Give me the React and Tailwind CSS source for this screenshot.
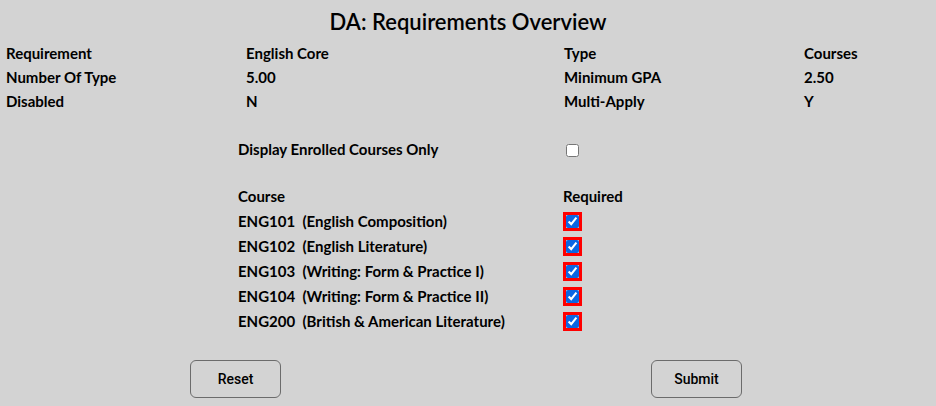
import React from "react";

const courses = [
  ["ENG101", "English Composition"],
  ["ENG102", "English Literature"],
  ["ENG103", "Writing: Form & Practice I"],
  ["ENG104", "Writing: Form & Practice II"],
  ["ENG200", "British & American Literature"],
];

export default function App() {
  return (
    <div className="w-[936px] h-[406px] bg-[#d3d3d3] text-black overflow-hidden" style={{ fontFamily: "Lato, 'Open Sans', sans-serif" }}>
      <div className="h-[41px] flex items-center justify-center pt-[1px]">
        <h1 className="text-[22px] font-semibold">DA: Requirements Overview</h1>
      </div>
      <div className="grid grid-cols-[240px_318px_240px_1fr] pl-[6px] text-[15px] font-bold leading-[24px]">
        <div>Requirement</div>
        <div>English Core</div>
        <div>Type</div>
        <div>Courses</div>
        <div>Number Of Type</div>
        <div>5.00</div>
        <div>Minimum GPA</div>
        <div>2.50</div>
        <div>Disabled</div>
        <div>N</div>
        <div>Multi-Apply</div>
        <div>Y</div>
      </div>
      <div className="mt-[24px] pl-[238px] text-[15px] font-bold">
        <div className="grid grid-cols-[325px_1fr] h-[24px] items-center">
          <div>Display Enrolled Courses Only</div>
          <div className="flex items-center">
            <input type="checkbox" className="w-[13px] h-[13px] ml-[3px] mt-[2px]" />
          </div>
        </div>
        <div className="mt-[23px] grid grid-cols-[325px_1fr] h-[25px] items-center">
          <div>Course</div>
          <div>Required</div>
        </div>
        {courses.map(([code, name]) => (
          <div key={code} className="grid grid-cols-[325px_1fr] h-[25px] items-center">
            <div className="whitespace-pre">{code}  ({name})</div>
            <div className="flex items-center">
              <span className="inline-flex border-[3px] border-[#ff0000]">
                <input type="checkbox" defaultChecked className="w-[13px] h-[13px] block accent-[#0b66e4]" />
              </span>
            </div>
          </div>
        ))}
      </div>
      <div className="mt-[26px] flex pl-[190px]">
        <button className="w-[91px] h-[38px] rounded-[6px] border border-[#6b6b6b] text-[14px] font-medium" style={{ fontFamily: "Roboto, sans-serif" }}>Reset</button>
        <button className="ml-[370px] w-[91px] h-[38px] rounded-[6px] border border-[#6b6b6b] text-[14px] font-medium" style={{ fontFamily: "Roboto, sans-serif" }}>Submit</button>
      </div>
    </div>
  );
}
